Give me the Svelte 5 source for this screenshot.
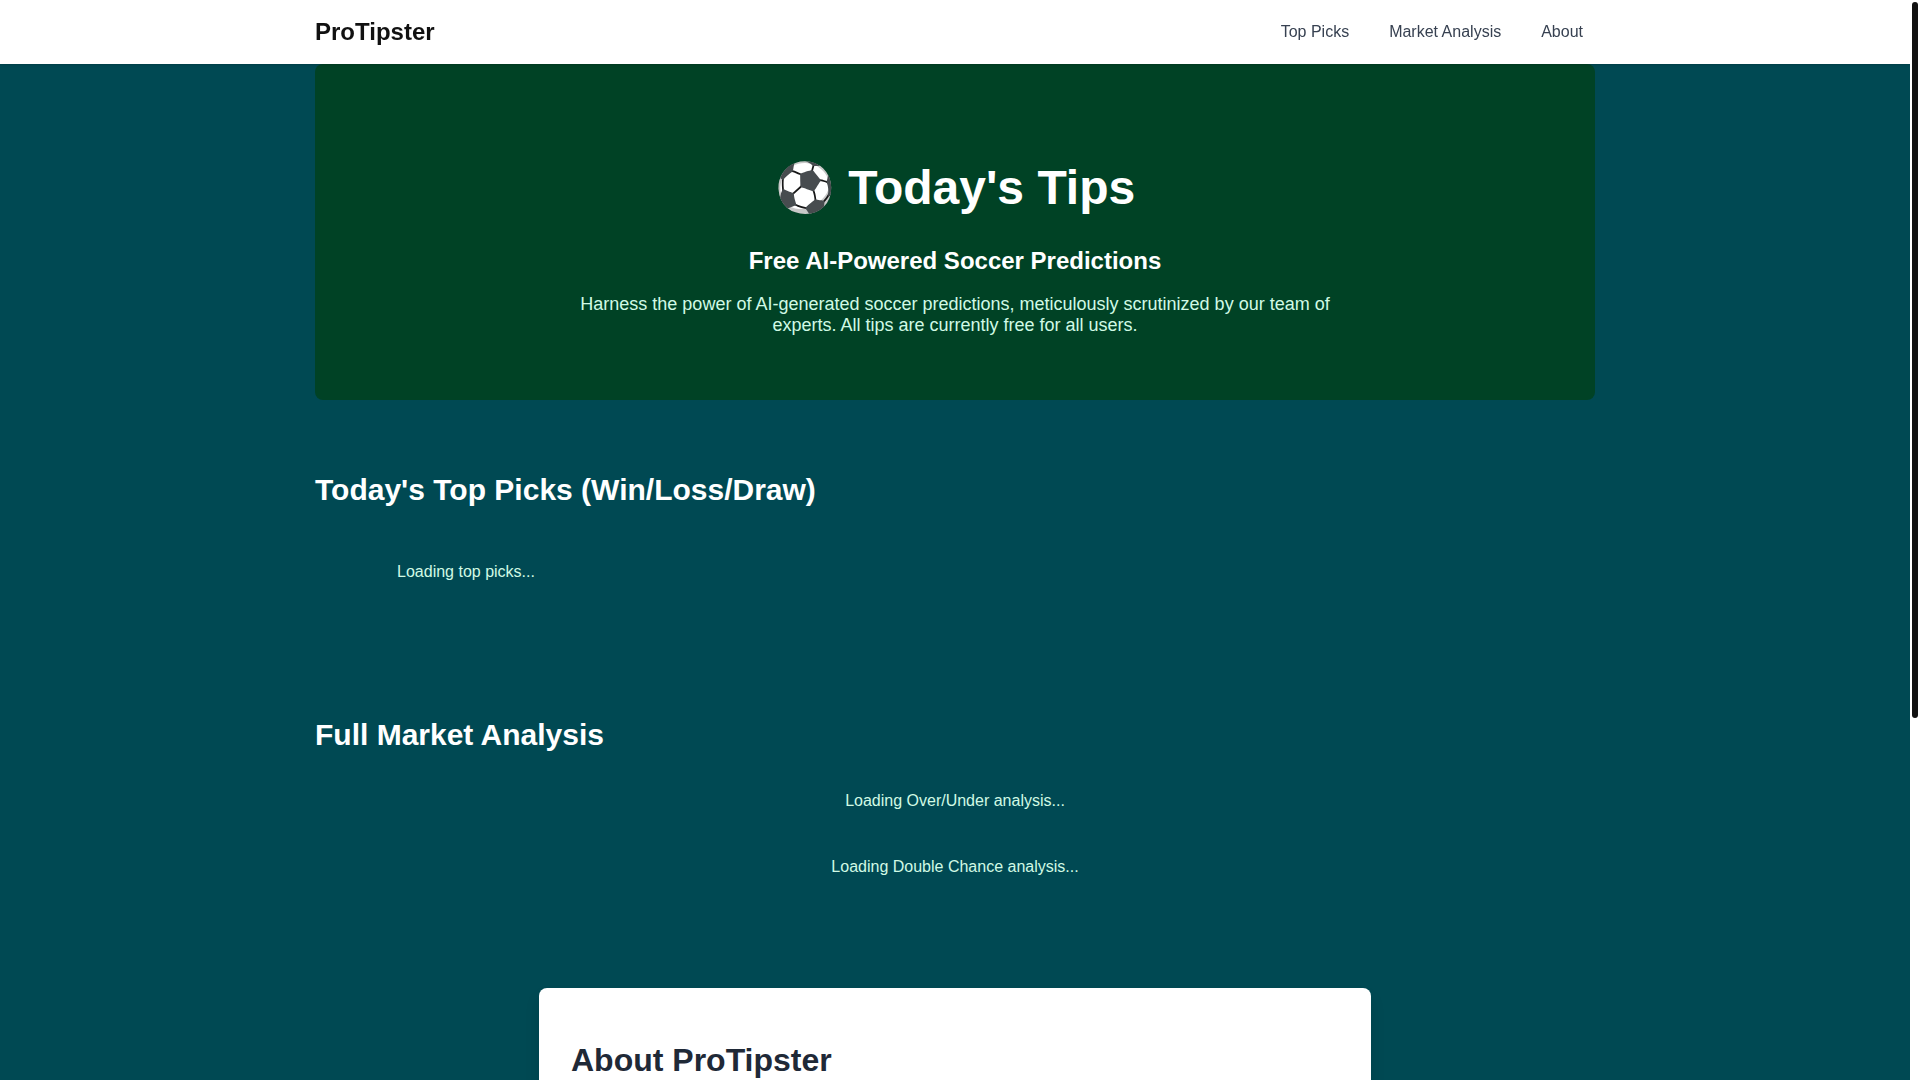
<script lang="ts">
    const links = [
        { href: '#top-picks', label: 'Top Picks' },
        { href: '#market-analysis', label: 'Market Analysis' },
        { href: '#about', label: 'About' }
    ];

    let scroller: HTMLElement | undefined = $state();
    let thumb = $state({ top: 0, size: 66.5 });

    function onscroll() {
        if (!scroller) return;
        const { scrollTop, scrollHeight, clientHeight } = scroller;
        const range = scrollHeight - clientHeight;
        thumb.top = range > 0 ? (scrollTop / range) * (100 - thumb.size) : 0;
    }
</script>

<div class="shell">
    <div class="page" bind:this={scroller} {onscroll}>
        <header>
            <nav class="container">
                <a class="logo" href="#top">ProTipster</a>
                <div class="links">
                    {#each links as link}
                        <a href={link.href}>{link.label}</a>
                    {/each}
                </div>
            </nav>
        </header>

        <main class="container">
            <section class="hero">
                <h1>⚽ Today's Tips</h1>
                <h2>Free AI-Powered Soccer Predictions</h2>
                <p>
                    Harness the power of AI-generated soccer predictions, meticulously
                    scrutinized by our team of experts. All tips are currently free for all users.
                </p>
            </section>

            <section id="top-picks" class="picks">
                <h2>Today's Top Picks (Win/Loss/Draw)</h2>
                <div class="pick-grid">
                    <p class="loading">Loading top picks...</p>
                </div>
            </section>

            <section id="market-analysis" class="market">
                <h2>Full Market Analysis</h2>
                <p class="loading">Loading Over/Under analysis...</p>
                <p class="loading">Loading Double Chance analysis...</p>
            </section>

            <section id="about" class="about">
                <h2>About ProTipster</h2>
            </section>
        </main>
    </div>

    <div class="track" aria-hidden="true">
        <div class="thumb" style="margin-top:{thumb.top}vh; height:{thumb.size}%"></div>
    </div>
</div>

<style>
    :global(body) {
        margin: 0;
        background: #004953;
        font-family: "Liberation Sans", Arial, sans-serif;
        font-size: 16px;
    }

    .shell {
        display: flex;
        height: 100vh;
    }

    .page {
        flex: 1;
        min-width: 0;
        overflow-y: auto;
        scrollbar-width: none;
        background: #004953;
    }

    .container {
        max-width: 1280px;
        margin: 0 auto;
    }

    header {
        position: sticky;
        top: 0;
        z-index: 10;
        background: #fff;
        box-shadow: 0 1px 3px rgba(0, 0, 0, 0.1), 0 1px 2px rgba(0, 0, 0, 0.06);
    }

    nav {
        display: flex;
        align-items: center;
        justify-content: space-between;
        height: 64px;
    }

    nav a {
        text-decoration: none;
    }

    .logo {
        font-size: 24px;
        font-weight: 700;
        color: #111;
    }

    .links {
        display: flex;
        gap: 16px;
    }

    .links a {
        padding: 8px 12px;
        color: #374151;
    }

    h1,
    h2,
    p {
        margin: 0;
    }

    h2 {
        font-size: 30px;
        line-height: 34px;
        color: #fff;
    }

    .hero {
        display: flex;
        flex-direction: column;
        align-items: center;
        padding: 96px 16px 64px;
        border-radius: 8px;
        background: #004225;
        text-align: center;
    }

    .hero h1 {
        margin-bottom: 32px;
        font-size: 48px;
        line-height: 56px;
        color: #fff;
    }

    .hero h2 {
        margin-bottom: 20px;
        font-size: 24px;
        line-height: 26px;
    }

    .hero p {
        max-width: 768px;
        font-size: 18px;
        line-height: 21px;
        color: #d1fae5;
    }

    .picks {
        padding: 73px 0 64px;
    }

    .pick-grid {
        display: grid;
        grid-template-columns: repeat(4, 1fr);
        gap: 24px;
        padding: 32px 0 49px;
    }

    .loading {
        padding: 24px 0;
        line-height: 18px;
        color: #d1fae5;
        text-align: center;
    }

    .market {
        padding: 0 0 88px;
    }

    .market h2 {
        margin-bottom: 16px;
    }

    .about {
        max-width: 768px;
        margin: 0 auto;
        padding: 54px 32px 32px;
        border-radius: 8px;
        background: #fff;
        box-shadow: 0 10px 15px rgba(0, 0, 0, 0.1);
    }

    .about h2 {
        font-size: 32px;
        line-height: 36px;
        color: #1f2937;
    }

    /* custom scrollbar */
    .track {
        flex: 0 0 6px;
        padding: 2px;
        background: #fff;
    }

    .thumb {
        border-radius: 3px;
        background: #111;
    }
</style>
